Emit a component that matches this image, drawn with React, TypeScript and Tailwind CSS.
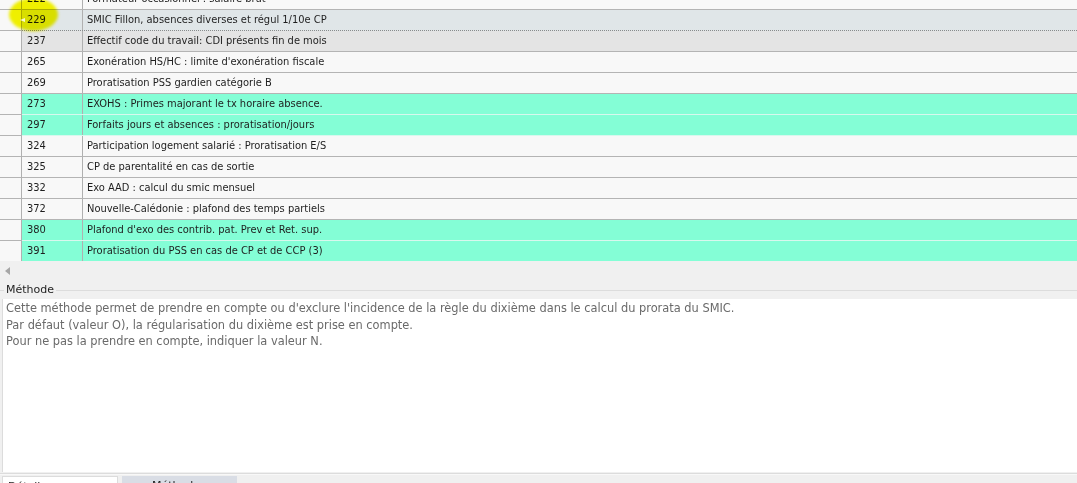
import React from "react";

type Row = { code: string; label: string; kind: "normal" | "green" | "sel" | "gray" };

const rows: Row[] = [
  { code: "222", label: "Formateur occasionnel : salaire brut", kind: "normal" },
  { code: "229", label: "SMIC Fillon, absences diverses et régul 1/10e CP", kind: "sel" },
  { code: "237", label: "Effectif code du travail: CDI présents fin de mois", kind: "gray" },
  { code: "265", label: "Exonération HS/HC : limite d'exonération fiscale", kind: "normal" },
  { code: "269", label: "Proratisation PSS gardien catégorie B", kind: "normal" },
  { code: "273", label: "EXOHS : Primes majorant le tx horaire absence.", kind: "green" },
  { code: "297", label: "Forfaits jours et absences : proratisation/jours", kind: "green" },
  { code: "324", label: "Participation logement salarié : Proratisation E/S", kind: "normal" },
  { code: "325", label: "CP de parentalité en cas de sortie", kind: "normal" },
  { code: "332", label: "Exo AAD : calcul du smic mensuel", kind: "normal" },
  { code: "372", label: "Nouvelle-Calédonie : plafond des temps partiels", kind: "normal" },
  { code: "380", label: "Plafond d'exo des contrib. pat. Prev et Ret. sup.", kind: "green" },
  { code: "391", label: "Proratisation du PSS en cas de CP et de CCP (3)", kind: "green" },
];

const gridFont = { fontFamily: '"DejaVu Sans Condensed", "Liberation Sans", sans-serif' };

function GridRow({ r }: { r: Row }) {
  const bg =
    r.kind === "green"
      ? "bg-[#84fed6]"
      : r.kind === "sel"
      ? "bg-[#e0e6e8]"
      : r.kind === "gray"
      ? "bg-[#e4e4e4]"
      : "bg-[#f8f8f8]";
  const cellBorder =
    r.kind === "sel"
      ? "border-b border-dotted border-b-[#8a8a8a]"
      : r.kind === "green"
      ? "border-b border-b-[#d8f8ee]"
      : "border-b border-b-[#b4b4b4]";
  return (
    <div className="flex h-[21px]" style={gridFont}>
      <div className="w-[22px] shrink-0 bg-[#f8f8f8] border-r border-r-[#b0b0b0] border-b border-b-[#b4b4b4]" />
      <div className={`flex flex-1 ${bg} ${cellBorder}`}>
        <div className="w-[61px] shrink-0 border-r border-r-[#b0b0b0] pl-[5px] flex items-center text-[11px] text-[#1e1e1e]">
          {r.code}
        </div>
        <div className="flex-1 pl-[4px] flex items-center text-[11px] text-[#1e1e1e] whitespace-nowrap">
          {r.label}
        </div>
      </div>
    </div>
  );
}

export default function App() {
  return (
    <div
      className="relative w-[1077px] h-[483px] overflow-hidden bg-[#f0f0f0]"
      style={{ fontFamily: '"DejaVu Sans", Tahoma, sans-serif' }}
    >
      {/* grid */}
      <div className="h-[261px] overflow-hidden bg-[#f8f8f8]">
        <div className="mt-[-11px]">
          {rows.map((r, i) => (
            <div key={i} className={r.kind === "sel" ? "border-t border-dotted border-t-[#8a8a8a] -mt-px" : ""}>
              <GridRow r={r} />
            </div>
          ))}
        </div>
      </div>
      {/* horizontal scrollbar */}
      <div className="h-[20px] flex items-center pl-[5px]">
        <div className="w-0 h-0 border-y-[4px] border-y-transparent border-r-[5px] border-r-[#a6a6a6]" />
      </div>
      {/* group box */}
      <div className="relative h-[18px]">
        <div className="absolute left-0 right-0 top-[9px] h-px bg-[#dcdcdc]" />
        <div className="absolute left-[4px] top-[2px] px-[2px] bg-[#f0f0f0] text-[11px] text-[#1e1e1e] leading-[13px]">
          Méthode
        </div>
      </div>
      <div className="h-[173px] bg-white border-l border-l-[#dcdcdc] ml-[2px] pl-[3px] pt-[1px] text-[11.4px] leading-[16.5px] text-[#6a6a6a]">
        <div>Cette méthode permet de prendre en compte ou d'exclure l'incidence de la règle du dixième dans le calcul du prorata du SMIC.</div>
        <div>Par défaut (valeur O), la régularisation du dixième est prise en compte.</div>
        <div>Pour ne pas la prendre en compte, indiquer la valeur N.</div>
      </div>
      <div className="h-px bg-[#dcdcdc] mt-[1px]" />
      <div className="h-px bg-[#f8f8f8]" />
      {/* tabs */}
      <div className="flex gap-[4px] pl-[2px] mt-[1px]">
        <div className="w-[116px] h-[12px] bg-white border border-[#dcdcdc] pl-[5px] pt-[3px] text-[11px] leading-[13px] text-[#1e1e1e] overflow-hidden">
          Détail comportement
        </div>
        <div className="w-[115px] h-[12px] bg-[#d9dde5] pl-[30px] pt-[3px] text-[11px] leading-[13px] text-[#1e1e1e] overflow-hidden">
          Méthode
        </div>
      </div>
      {/* yellow highlighter annotation */}
      <div className="absolute left-[9px] top-[-2px] w-[49px] h-[33px] rounded-[50%] bg-[#f6f600] blur-[1.5px] mix-blend-multiply" />
      <div className="absolute left-[20px] top-[18px] w-0 h-0 border-y-[2px] border-y-transparent border-r-[5px] border-r-white opacity-80" />
    </div>
  );
}
